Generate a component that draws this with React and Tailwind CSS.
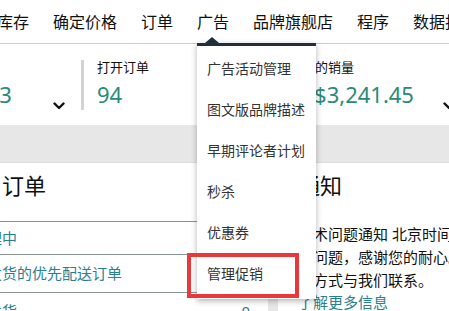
import React from 'react';

const navItems = ['库存', '确定价格', '订单', '广告', '品牌旗舰店', '程序', '数据报告'];

const menuItems = ['广告活动管理', '图文版品牌描述', '早期评论者计划', '秒杀', '优惠券', '管理促销'];

const Chevron = () => (
  <svg width="12" height="8" viewBox="0 0 12 8" className="block">
    <path d="M1.5 1.5 L6 6 L10.5 1.5" fill="none" stroke="#111" strokeWidth="2.4" strokeLinecap="round" strokeLinejoin="round" />
  </svg>
);

const AdsMenu = () => (
  <>
    <div className="absolute left-[8px] top-[37px] w-0 h-0 border-x-[7px] border-x-transparent border-b-[6px] border-b-[#232f3e]" />
    <div className="absolute left-0 top-[43px] z-20 w-[119px] bg-white border-t-[3px] border-[#232f3e] shadow-[0_2px_6px_rgba(0,0,0,0.3)] pt-[2px] pb-[5px]">
      {menuItems.map((item) => (
        <div key={item} className="h-[41px] flex items-center pl-[10px] text-[14px] text-[#333] whitespace-nowrap">
          {item}
        </div>
      ))}
      <div className="absolute left-[-10px] top-[207px] w-[112px] h-[45px] border-[4px] border-[#e8383a]" />
    </div>
  </>
);

const Metric = ({ label, value, width, pad, chevronRight }) => (
  <div className={`flex h-full shrink-0 ${width} ${pad}`}>
    <div className="flex-1 pt-[14px] whitespace-nowrap">
      <div className="text-[13px] leading-[18px] text-[#0f1111]">{label}</div>
      <div className="mt-[4px] text-[22px] leading-[28px] text-[#2a8a78]">{value}</div>
    </div>
    <div className={`mt-[58px] ${chevronRight}`}>
      <Chevron />
    </div>
  </div>
);

const Divider = () => <div className="w-[3px] h-[50px] mt-[16px] bg-[#d3d3d3] shrink-0" />;

const orderRows = [
  { text: '处理中', count: '2', h: 'h-[33px]' },
  { text: '未发货的优先配送订单', count: '0', h: 'h-[38px]' },
  { text: '未发货', count: '0', h: 'h-[38px]' },
];

export default function App() {
  return (
    <div
      className="relative w-[449px] h-[311px] overflow-hidden bg-[#e7e7e7]"
      style={{ fontFamily: '"Noto Sans", "Noto Sans CJK SC", sans-serif' }}
    >
      {/* top nav */}
      <div className="h-[44px] bg-white border-b border-[#cccccc] overflow-visible">
        <div className="flex h-full items-center gap-6 ml-[-3px]">
          {navItems.map((item) => (
            <div key={item} className="relative h-full flex items-center shrink-0 text-[16px] text-[#0f1111] whitespace-nowrap">
              {item}
              {item === '广告' && <AdsMenu />}
            </div>
          ))}
        </div>
      </div>

      {/* metrics */}
      <div className="h-[81px] bg-white flex ml-[-40px]">
        <Metric label="消息" value="113" width="w-[121px]" pad="pl-[14px]" chevronRight="mr-[16px]" />
        <Divider />
        <Metric label="打开订单" value="94" width="w-[203px]" pad="pl-[13px]" chevronRight="mr-[16px]" />
        <Divider />
        <Metric label="总的销量" value="S$3,241.45" width="w-[170px]" pad="pl-[12px]" chevronRight="mr-[5px]" />
      </div>

      {/* grey band */}
      <div className="h-[38px] border-b border-[#dddddd]" />

      {/* cards */}
      <div className="flex ml-[-48px]">
        <div className="w-[316px] bg-white px-[20px] pt-[7px] pb-[20px] shrink-0">
          <h2 className="ml-[30px] text-[22px] leading-[30px] text-[#0f1111]">订单</h2>
          <div className="mt-[21px]">
            {orderRows.map((row) => (
              <div key={row.text} className={`${row.h} border-t border-[#8a9696] flex items-center justify-between text-[15px] text-[#2a7f8f] whitespace-nowrap`}>
                <span>{row.text}</span>
                <span className="mr-[-2px]">{row.count}</span>
              </div>
            ))}
          </div>
        </div>
        <div className="ml-[10px] bg-white pl-[20px] pt-[7px] w-[300px] shrink-0">
          <h2 className="text-[22px] leading-[30px] text-[#0f1111]">通知</h2>
          <div className="mt-[23px] text-[15px] leading-[23px] text-[#0f1111] whitespace-nowrap">
            技术问题通知 北京时间上午我们的系统遇到了
            <br />
            此问题，感谢您的耐心。如需帮助，请通过另一
            <br />
            种方式与我们联系。
          </div>
          <div className="mt-[2px] text-[15px] leading-[17px] text-[#2a7f8f]">了解更多信息</div>
        </div>
      </div>
    </div>
  );
}
